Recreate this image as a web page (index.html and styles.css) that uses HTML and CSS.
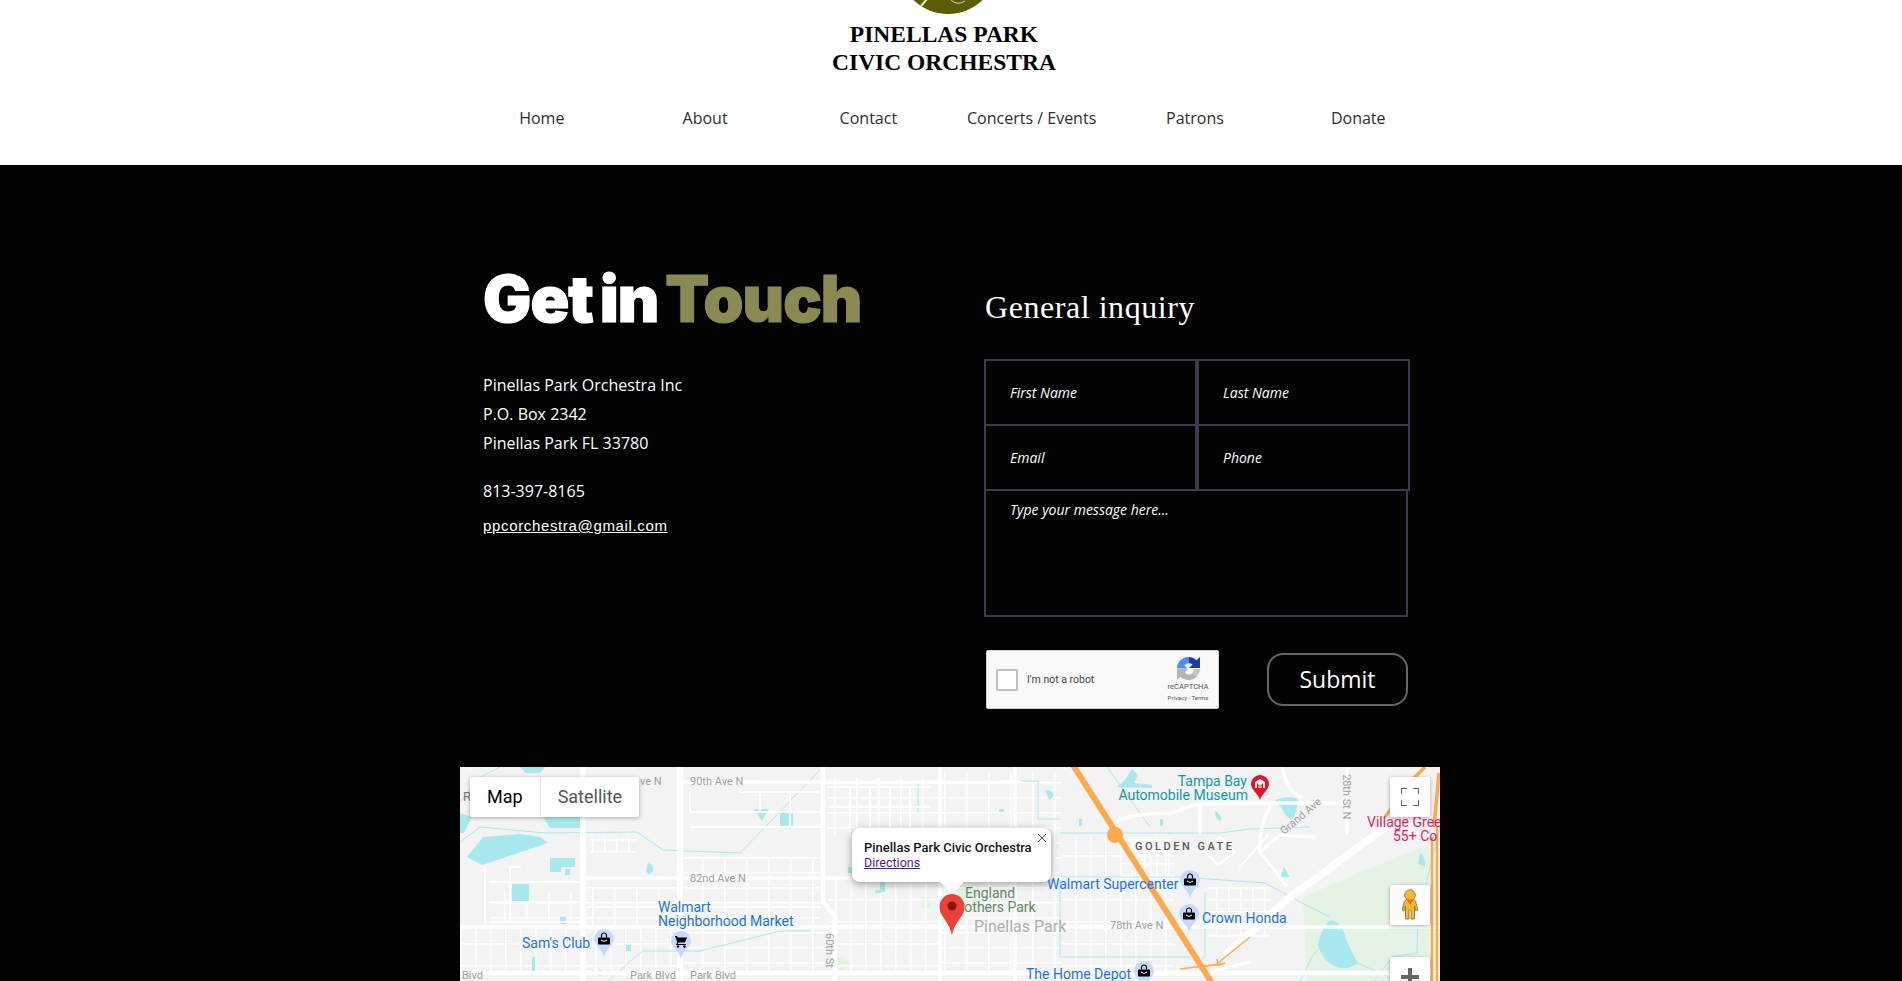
FILE: index.html
```html
<!DOCTYPE html>
<html lang="en">
<head>
<meta charset="utf-8">
<title>Contact | Pinellas Park Civic Orchestra</title>
<link rel="stylesheet" href="styles.css">
</head>
<body>
<header class="site-header">
  <div class="logo">
    <svg class="logo-mark" width="110" height="14" viewBox="0 0 110 14" aria-hidden="true">
      <circle cx="55" cy="-35.5" r="49.5" fill="#5c5c00"/>
      <path d="M34 -1 L28 6" stroke="#e8e8d8" stroke-width="2" fill="none"/>
      <path d="M58 0 Q64 6 72 1" stroke="#d8d8b8" stroke-width="1" fill="none"/>
    </svg>
    <div class="logo-text">PINELLAS PARK<br>CIVIC ORCHESTRA</div>
  </div>
  <nav class="nav">
    <a>Home</a><a>About</a><a>Contact</a><a>Concerts / Events</a><a>Patrons</a><a>Donate</a>
  </nav>
</header>

<main class="contact">
  <div class="contact-grid">
    <section class="info">
      <h1 class="title">Get in <span class="title-accent">Touch</span></h1>
      <p class="address">Pinellas Park Orchestra Inc<br>P.O. Box 2342<br>Pinellas Park FL 33780</p>
      <p class="phone">813-397-8165</p>
      <p class="email"><a>ppcorchestra@gmail.com</a></p>
    </section>
    <section class="inquiry">
      <h2 class="inquiry-title">General inquiry</h2>
      <form class="form">
        <div class="field">First Name</div>
        <div class="field">Last Name</div>
        <div class="field">Email</div>
        <div class="field">Phone</div>
        <div class="message">Type your message here...</div>
      </form>
      <div class="form-foot">
        <div class="captcha">
          <span class="captcha-box"></span>
          <span class="captcha-label">I'm not a robot</span>
          <div class="captcha-brand">
            <svg width="23" height="23" viewBox="0 0 24 24" aria-hidden="true">
              <path d="M0 12 A12 12 0 0 1 12 0 V6.500 A5.500 5.500 0 0 0 7.800 8.800 L11 12 Z" fill="#4a90f5"/>
              <path d="M12 0 A12 12 0 0 1 20.500 3.500 L24 0 V11.500 H12.500 L16.200 8 A5.500 5.500 0 0 0 12 6.500 Z" fill="#1c3aa9"/>
              <path d="M0 12.500 H11.500 L8 16 A5.500 5.500 0 0 0 16 17 L20.500 20.500 A12 12 0 0 1 3.500 20.500 L0 24 Z" fill="#b4b4b4"/>
              <path d="M16 17 L20.500 20.500 A12 12 0 0 0 24 12.500 H17.500 A5.500 5.500 0 0 1 16 17 Z" fill="#c4c4c4"/>
            </svg>
            <span class="captcha-name">reCAPTCHA</span>
            <span class="captcha-links">Privacy - Terms</span>
          </div>
        </div>
        <button class="submit" type="button">Submit</button>
      </div>
    </section>
  </div>

  <div class="map">
    <svg class="map-canvas" width="980" height="214" viewBox="0 0 980 214" aria-label="Map of Pinellas Park">
      <defs>
        <pattern id="blocks-a" width="22" height="15" patternUnits="userSpaceOnUse">
          <path d="M0 .75H22M.75 0V15" stroke="#fff" stroke-width="1.5" fill="none"/>
        </pattern>
        <pattern id="blocks-b" width="15" height="22" patternUnits="userSpaceOnUse">
          <path d="M0 .75H15M.75 0V22" stroke="#fff" stroke-width="1.5" fill="none"/>
        </pattern>
        <pattern id="blocks-c" width="12" height="12" patternUnits="userSpaceOnUse">
          <path d="M0 .75H12M.75 0V12" stroke="#fff" stroke-width="1.3" fill="none"/>
        </pattern>
      </defs>
      <rect width="980" height="214" fill="#f3f3f3"/>

      <!-- parks -->
      <path d="M843 130 L913 100 L980 74 V214 H847 Z" fill="#e5f3e5"/>
      <rect x="461" y="130" width="9" height="11" fill="#e5f3e5"/>
      <rect x="488" y="118" width="32" height="22" fill="#e5f3e5"/>
      <path d="M372 195 L382 188 L392 198 L380 204 Z" fill="#e5f3e5"/>

      <!-- street blocks -->
      <rect x="0" y="160" width="120" height="46" fill="url(#blocks-b)"/>
      <rect x="125" y="120" width="95" height="40" fill="url(#blocks-a)"/>
      <rect x="125" y="160" width="95" height="46" fill="url(#blocks-b)"/>
      <rect x="224" y="90" width="136" height="70" fill="url(#blocks-a)"/>
      <rect x="224" y="160" width="140" height="46" fill="url(#blocks-a)"/>
      <rect x="368" y="10" width="112" height="60" fill="url(#blocks-a)"/>
      <rect x="368" y="110" width="112" height="96" fill="url(#blocks-b)"/>
      <rect x="480" y="5" width="122" height="205" fill="url(#blocks-a)"/>
      <rect x="602" y="70" width="112" height="140" fill="url(#blocks-b)"/>
      <rect x="748" y="120" width="62" height="50" fill="url(#blocks-c)"/>
      <rect x="660" y="70" width="54" height="40" fill="url(#blocks-c)"/>
      <rect x="130" y="70" width="47" height="16" fill="url(#blocks-c)"/>
      <rect x="30" y="125" width="90" height="30" fill="url(#blocks-a)"/>

      <!-- waterways -->
      <g fill="#a8e9ef">
        <path d="M7 90 L23 70 L60 67 L80 70 L88 76 L70 82 L55 87 L22 98 Z"/>
        <path d="M90 91 H115 V100 H101 V105 H90 Z"/>
        <rect x="105" y="102" width="5" height="6"/>
        <rect x="52" y="117" width="17" height="17"/>
        <rect x="100" y="150" width="6" height="7"/>
        <path d="M83 50 H120 V61 H90 Z"/>
        <path d="M60 0 H85 L80 6 H66 Z"/>
        <path d="M0 46 L12 50 L4 66 H0 Z"/>
        <path d="M188 96 Q194 98 193 104 Q189 110 186 104 Z"/>
        <path d="M294 42 H309 L302 54 Z"/>
        <rect x="320" y="45" width="13" height="14" rx="2"/>
        <rect x="166" y="178" width="5" height="6"/>
        <rect x="72" y="190" width="3" height="14"/>
        <path d="M388 100 H396 V106 H388 Z"/>
        <rect x="415" y="123" width="6" height="3"/>
        <path d="M420 110 H425 V125 H420 Z"/>
        <path d="M657 20 L664 14 L672 2 L678 8 L674 16 L692 18 V21 Z"/>
        <path d="M585 23 Q594 22 593 30 L589 33 Z"/>
        <rect x="539" y="42" width="5" height="3"/>
        <rect x="619" y="52" width="3" height="7"/>
        <rect x="700" y="52" width="3" height="7"/>
        <path d="M755 44 Q762 48 761 54 Q755 52 755 44 Z"/>
        <path d="M815 33 Q828 28 838 32 Q838 44 832 53 Q826 50 822 42 Z"/>
        <path d="M858 178 Q862 158 871 153 Q882 156 886 172 Q892 186 898 196 Q888 204 876 200 Q862 194 858 178 Z"/>
        <path d="M810 96 L816 104 L810 102 Z M824 100 L830 110 H820 Z"/>
        <path d="M960 85 Q966 92 965 100 L958 97 Z"/>
        <circle cx="140" cy="206" r="3"/>
      </g>
      <g fill="none" stroke="#a8e9ef" stroke-width="1">
        <path d="M0 75 L20 60 L85 66 L177 65 L203 83 L280 86 L360 3"/>
        <path d="M0 35 L20 10 L40 0"/>
        <path d="M148 214 L182 184 H240 L320 164 H350"/>
        <path d="M368 14 H458 V46 M480 14 H578 V52 H600"/>
        <path d="M600 66 H760 L790 62 L850 60 M647 0 L690 60"/>
        <path d="M600 110 V190 H730 M600 110 H720 L805 116 L840 135 L870 150"/>
        <path d="M745 125 V190 L738 196"/>
        <path d="M897 196 L930 210 M840 214 L852 190 L860 180 M913 216 L932 190 L957 186 L958 150 L980 60"/>
      </g>

      <!-- roads -->
      <g fill="none" stroke="#fff" stroke-linecap="round" stroke-linejoin="round">
        <path stroke-width="6" d="M123 0 V214 M220 0 V214"/>
        <path stroke-width="4.500" d="M363 0 V135 L375 150 V214"/>
        <path stroke-width="4.500" d="M0 206 H980"/>
        <path stroke-width="3.500" d="M0 160 H980 M125 111 H600"/>
        <path stroke-width="3.500" d="M220 15 H560 M480 0 V214 M555 0 V214"/>
        <path stroke-width="2" d="M125 140 H360 M125 118 V160 M60 100 H50 V155 M25 100 V155 M30 115 H120 M30 135 H120 M30 155 H120"/>
        <path stroke-width="2" d="M230 25 V45 H362 M230 60 H362 M280 25 H360 M300 25 V45 M330 25 V60"/>
        <path stroke-width="2" d="M368 20 H470 M370 40 H470 M390 20 V70 M410 20 V70 M430 20 V70 M450 20 V70"/>
        <path stroke-width="3.500" d="M653 56 Q672 46 713 46 L733 38 Q750 36 806 36 L887 36 M887 0 V66 M812 36 Q798 60 800 85 L826 118 M855 70 L820 68 L800 85 M740 40 V65 M840 30 Q828 25 822 0"/>
        <path stroke-width="2" d="M808 68 L780 100 M760 70 L775 85 L758 98 L744 84 Z"/>
        <path stroke-width="7.500" d="M767 186 L830 130 L926 60 L980 56"/>
        <path stroke-width="3" d="M690 207 H740 L790 195"/>
      </g>

      <!-- highway -->
      <g fill="none" stroke="#ffa94f" stroke-linejoin="round">
        <path stroke-width="6" d="M613 -2 L752 216"/>
        <circle cx="655" cy="68" r="8" fill="#ffa94f" stroke="none"/>
        <path stroke-width="2.500" d="M977 60 V214 M972 214 V70"/>
        <path stroke-width="3.500" d="M974 60 L979 6 M925 50 L955 10 L965 0"/>
        <path stroke-width="1.500" d="M720 202 L760 197 L756 198 M758 198 Q770 195 760 197 M758 198 L757 192 M760 197 L740 200"/>
        <path stroke-width="1.500" d="M758 196 L790 170"/>
      </g>

      <!-- labels -->
      <g class="lbl-road">
        <text x="180" y="18">ve N</text>
        <text x="230" y="18">90th Ave N</text>
        <text x="230" y="115">82nd Ave N</text>
        <text x="650" y="162">78th Ave N</text>
        <text x="2" y="212">Blvd</text>
        <text x="170" y="212">Park Blvd</text>
        <text x="230" y="212">Park Blvd</text>
        <text transform="translate(366 166) rotate(90)">60th St</text>
        <text transform="translate(883 7) rotate(90)">28th St N</text>
        <text transform="translate(824 68) rotate(-40)">Grand Ave</text>
        <text x="3" y="34" class="lbl-r">R</text>
      </g>
      <text class="lbl-area" x="675" y="83">GOLDEN GATE</text>
      <text class="lbl-town" x="514" y="165">Pinellas Park</text>
      <g class="lbl-park">
        <text x="505" y="131">England</text>
        <text x="491" y="145">Brothers Park</text>
      </g>
      <g class="lbl-shop">
        <text x="198" y="145">Walmart</text>
        <text x="198" y="159">Neighborhood Market</text>
        <text x="62" y="181">Sam's Club</text>
        <text x="587" y="122">Walmart Supercenter</text>
        <text x="742" y="156">Crown Honda</text>
        <text x="566" y="212">The Home Depot</text>
      </g>
      <g class="lbl-museum" text-anchor="end">
        <text x="787" y="19">Tampa Bay</text>
        <text x="788" y="33">Automobile Museum</text>
      </g>
      <g class="lbl-senior">
        <text x="907" y="60">Village Gree</text>
        <text x="933" y="74">55+ Co</text>
      </g>

      <!-- place pins -->
      <defs>
        <g id="shop-pin">
          <path d="M0 -10 A10 10 0 0 1 10 0 C10 6 2.500 9 0 18 C-2.500 9 -10 6 -10 0 A10 10 0 0 1 0 -10 Z" fill="#c6dafc"/>
          <rect x="-6" y="-1.500" width="12" height="7" rx="1" fill="#000"/>
          <path d="M-2.500 -1.500 V-3.500 A2.500 2.500 0 0 1 2.500 -3.500 V-1.500" fill="none" stroke="#000" stroke-width="1.200"/>
          <path d="M-3 1 Q0 4 3 1" fill="none" stroke="#fff" stroke-width="1"/>
        </g>
      </defs>
      <use href="#shop-pin" x="144" y="172"/>
      <use href="#shop-pin" x="730" y="113"/>
      <use href="#shop-pin" x="729" y="147"/>
      <use href="#shop-pin" x="684" y="204"/>
      <g transform="translate(221 174)">
        <path d="M0 -10 A10 10 0 0 1 10 0 C10 6 2.500 9 0 18 C-2.500 9 -10 6 -10 0 A10 10 0 0 1 0 -10 Z" fill="#c6dafc"/>
        <path d="M-6 -5 H-4 L-3.300 -3.500 H6 L4 1.500 H-2.500 L-3.200 3 H5 V4 H-5 L-3.800 1.200 L-5.500 -4 H-6 Z" fill="#000"/>
        <circle cx="-3" cy="5.500" r="1.200" fill="#000"/>
        <circle cx="3.500" cy="5.500" r="1.200" fill="#000"/>
      </g>
      <g transform="translate(800 17)">
        <path d="M0 -9 A9 9 0 0 1 9 0 C9 6 2 9 0 16 C-2 9 -9 6 -9 0 A9 9 0 0 1 0 -9 Z" fill="#e8112a"/>
        <path d="M-5 -2 L0 -5 L5 -2 V4 H-5 Z" fill="#fff"/>
        <path d="M-3 4 V-1 L0 2 L3 -1 V4 H1.500 V1.500 L0 3 L-1.500 1.500 V4 Z" fill="#e8112a"/>
      </g>

      <!-- marker -->
      <path d="M492 127 A12.500 12.500 0 0 1 504.500 139.500 C504.500 150 496 152 492 168 C488 152 479.500 150 479.500 139.500 A12.500 12.500 0 0 1 492 127 Z" fill="#ea4335"/>
      <circle cx="492" cy="139" r="4.500" fill="#8a1410"/>
    </svg>

    <div class="map-type">
      <span class="map-type-btn is-active">Map</span>
      <span class="map-type-btn">Satellite</span>
    </div>

    <div class="bubble">
      <button class="bubble-close" type="button" aria-label="Close">
        <svg width="10" height="10" viewBox="0 0 10 10"><path d="M1 1L9 9M9 1L1 9" stroke="#555" stroke-width="1"/></svg>
      </button>
      <div class="bubble-title">Pinellas Park Civic Orchestra</div>
      <a class="bubble-link">Directions</a>
    </div>

    <button class="map-btn map-btn-full" type="button" aria-label="Fullscreen">
      <svg width="18" height="18" viewBox="0 0 18 18"><path d="M0 6V0H6M12 0H18V6M18 12V18H12M6 18H0V12" fill="none" stroke="#666" stroke-width="2"/></svg>
    </button>
    <button class="map-btn map-btn-peg" type="button" aria-label="Street View">
      <svg width="18" height="32" viewBox="0 0 18 32">
        <path d="M3.500 12 L6 10 H12 L14.500 12 L17 21 L15 22 L13.500 17 V30 H10 V21 H8 V30 H4.500 V17 L3 22 L1 21 Z" fill="#fdb827" stroke="#7d6a45" stroke-width=".8"/>
        <circle cx="9" cy="6" r="5.300" fill="#fdb827" stroke="#7d6a45" stroke-width=".8"/>
        <path d="M6 11 H12 L9 16 Z" fill="#d9722a"/>
      </svg>
    </button>
    <button class="map-btn map-btn-zoom" type="button" aria-label="Zoom in">
      <svg width="18" height="18" viewBox="0 0 18 18"><path d="M7 0H11V7H18V11H11V18H7V11H0V7H7Z" fill="#666"/></svg>
    </button>
  </div>
</main>
</body>
</html>
```

FILE: styles.css
```css
* { box-sizing: border-box; }
html, body { margin: 0; height: 981px; overflow: hidden; background: #030303; }
body { font-family: "Open Sans", "Liberation Sans", sans-serif; }

.site-header {
  height: 165px;
  background: #fff;
  padding-right: 2px;
  display: flex;
  flex-direction: column;
  align-items: center;
}
.logo { display: flex; flex-direction: column; align-items: center; }
.logo-mark { display: block; margin-left: -3px; }
.logo-text {
  margin-top: 6px;
  margin-left: -12px;
  font: bold 23.500px/28px "Liberation Serif", serif;
  color: #000;
  text-align: center;
  white-space: nowrap;
}
.nav {
  margin-top: 31px;
  width: 980px;
  display: grid;
  grid-template-columns: repeat(6, 163.3px);
  justify-content: center;
}
.nav a {
  font-size: 16px;
  line-height: 22px;
  color: #2f2e2e;
  text-align: center;
  white-space: nowrap;
}

.contact { height: 816px; background: #030303; padding-right: 2px; }
.contact-grid {
  width: 980px;
  margin: 0 auto;
  height: 602px;
  display: grid;
  grid-template-columns: 524px 456px;
  color: #fff;
}
.info { padding: 97px 0 0 23px; }
.title {
  margin: 0;
  font: 900 64px/74px Inter, "Liberation Sans", sans-serif;
  letter-spacing: -.9px;
  word-spacing: -5px;
  -webkit-text-stroke: 1.200px currentColor;
  color: #fff;
  white-space: nowrap;
}
.title-accent { color: #8a8a52; }
.address { margin: 35px 0 0; font-size: 16px; line-height: 29px; }
.phone { margin: 19px 0 0; font-size: 16px; line-height: 29px; }
.email {
  margin: 5px 0 0;
  font: 15px/29px "Liberation Sans", sans-serif;
  letter-spacing: .65px;
}
.email a { color: #fff; text-decoration: underline; }

.inquiry { padding: 123px 0 0 0; }
.inquiry-title {
  margin: 0 0 0 1px;
  font: 400 32px/38px "Liberation Serif", serif;
  letter-spacing: .55px;
  color: #fff;
}
.form {
  margin-top: 33px;
  width: 426px;
  display: grid;
  grid-template-columns: 213px 213px;
  font-style: italic;
  font-size: 14px;
  color: #fff;
}
.field {
  height: 67px;
  margin-bottom: -2px;
  border: 2px solid #3a3a50;
  padding-left: 24px;
  display: flex;
  align-items: center;
}
.message {
  grid-column: 1 / -1;
  width: 424px;
  height: 128px;
  border: 2px solid #3a3a50;
  padding: 9px 24px;
  line-height: 20px;
}
.form-foot {
  margin-top: 33px;
  width: 424px;
  display: flex;
  justify-content: space-between;
  align-items: center;
  padding-left: 2px;
}
.captcha {
  width: 233px;
  height: 59px;
  background: #f9f9f9;
  border: 1px solid #d3d3d3;
  border-radius: 2px;
  display: flex;
  align-items: center;
  padding-left: 9px;
  color: #333;
  font-family: Roboto, sans-serif;
}
.captcha-box {
  width: 22px;
  height: 22px;
  background: #fff;
  border: 2px solid #c1c1c1;
  border-radius: 2px;
  flex: none;
}
.captcha-label { margin-left: 9px; font-size: 10.500px; color: #444; flex: 1; }
.captcha-brand {
  width: 52px;
  display: flex;
  flex-direction: column;
  align-items: center;
  margin-right: 4px;
}
.captcha-name { font-size: 7.600px; line-height: 11px; color: #555; margin-top: 1px; white-space: nowrap; }
.captcha-links { font-size: 6px; line-height: 9px; color: #555; margin-top: 1px; white-space: nowrap; }
.submit {
  width: 141px;
  height: 53px;
  background: #030303;
  border: 2px solid #666;
  border-radius: 16px;
  color: #fff;
  font: 23px/1 "Open Sans", sans-serif;
  padding: 0;
}

.map {
  position: relative;
  width: 980px;
  height: 214px;
  margin: 0 auto;
  overflow: hidden;
  background: #f3f3f3;
  font-family: Roboto, sans-serif;
}
.map-canvas { display: block; }
.lbl-road { font: 11px Roboto, sans-serif; fill: #a0a0a0; }
.lbl-r { font-size: 13px; fill: #777; }
.lbl-area { font: 500 11px Roboto, sans-serif; letter-spacing: 2.500px; fill: #5a5a5a; }
.lbl-town { font: 16px Roboto, sans-serif; fill: #aeaeae; }
.lbl-park { font: 14px Roboto, sans-serif; fill: #5f8a63; }
.lbl-shop { font: 14px Roboto, sans-serif; fill: #1a73e8; }
.lbl-museum { font: 14px Roboto, sans-serif; fill: #129aa6; }
.lbl-senior { font: 14px Roboto, sans-serif; fill: #ec1c62; }

.map-type {
  position: absolute;
  left: 10px;
  top: 10px;
  height: 40px;
  display: flex;
  background: #fff;
  border-radius: 2px;
  box-shadow: 0 1px 4px rgba(0,0,0,.3);
  font-size: 18px;
}
.map-type-btn { padding: 0 17px; line-height: 40px; color: #565656; }
.map-type-btn.is-active { color: #000; border-right: 1px solid #e6e6e6; }

.bubble {
  position: absolute;
  left: 392px;
  top: 61px;
  width: 199px;
  height: 54px;
  background: #fff;
  border-radius: 8px;
  box-shadow: 0 2px 7px 1px rgba(0,0,0,.3);
  padding: 12px 12px;
  font-size: 12.500px;
  line-height: 15px;
}
.bubble::after {
  content: "";
  position: absolute;
  left: 88px;
  top: 54px;
  border: 12px solid transparent;
  border-top-color: #fff;
  border-bottom-width: 0;
}
.bubble-title { font-size: 13px; font-weight: 500; color: #151515; white-space: nowrap; }
.bubble-link { color: #551a9b; text-decoration: underline; }
.bubble-close {
  position: absolute;
  right: 3px;
  top: 4px;
  width: 12px;
  height: 12px;
  padding: 0;
  border: 0;
  background: none;
  display: flex;
  align-items: center;
  justify-content: center;
}

.map-btn {
  position: absolute;
  left: 930px;
  width: 40px;
  height: 40px;
  padding: 0;
  border: 0;
  background: #fff;
  border-radius: 2px;
  box-shadow: 0 1px 4px rgba(0,0,0,.3);
  display: flex;
  align-items: center;
  justify-content: center;
}
.map-btn-full { top: 10px; }
.map-btn-peg { top: 118px; }
.map-btn-zoom { top: 190px; }
```
